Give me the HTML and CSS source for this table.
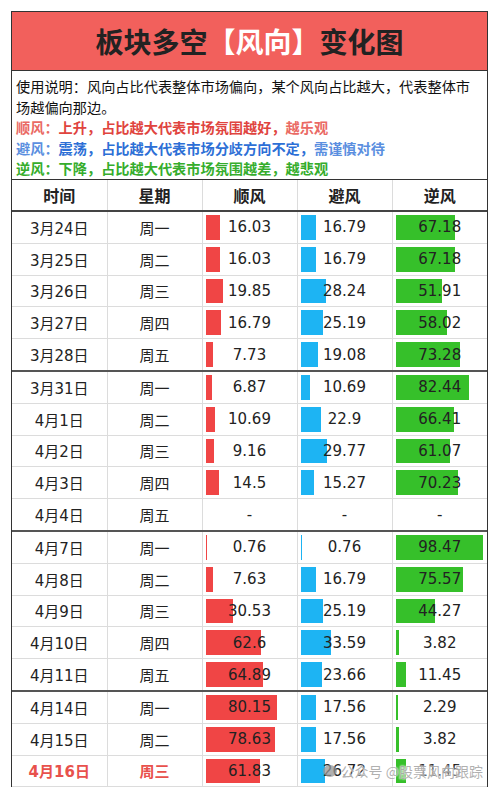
FILE: index.html
```html
<!DOCTYPE html>
<html lang="zh">
<head>
  <meta charset="UTF-8">
  <title>板块多空【风向】变化图</title>
  <link rel="stylesheet" href="styles.css">
</head>
<body>

  <div class="sheet">
    <div class="title">板块多空<span class="hl">【风向】</span>变化图</div>

    <div class="desc">
      <div>使用说明：风向占比代表整体市场偏向，某个风向占比越大，代表整体市场越偏向那边。</div>
      <div class="up"><span class="lt">顺风：</span>上升，占比越大代表市场氛围越好，<span class="lt">越乐观</span></div>
      <div class="mid"><span class="lt">避风：</span>震荡，占比越大代表市场分歧方向不定，<span class="lt">需谨慎对待</span></div>
      <div class="down">逆风：下降，占比越大代表市场氛围越差，越悲观</div>
    </div>

    <table class="grid">
      <thead>
        <tr>
          <th>时间</th><th>星期</th><th>顺风</th><th>避风</th><th>逆风</th>
        </tr>
      </thead>
      <tbody id="rows"></tbody>
    </table>

    <div class="mark"><span class="mark-icon"></span>公众号 @股票风向跟踪</div>
  </div>

  <script>
    // 日期, 星期, 顺风, 避风, 逆风, 是否新一周
    const data = [
      ["3月24日", "周一", 16.03, 16.79, 67.18, false],
      ["3月25日", "周二", 16.03, 16.79, 67.18, false],
      ["3月26日", "周三", 19.85, 28.24, 51.91, false],
      ["3月27日", "周四", 16.79, 25.19, 58.02, false],
      ["3月28日", "周五", 7.73, 19.08, 73.28, false],
      ["3月31日", "周一", 6.87, 10.69, 82.44, true],
      ["4月1日", "周二", 10.69, 22.9, 66.41, false],
      ["4月2日", "周三", 9.16, 29.77, 61.07, false],
      ["4月3日", "周四", 14.5, 15.27, 70.23, false],
      ["4月4日", "周五", null, null, null, false],
      ["4月7日", "周一", 0.76, 0.76, 98.47, true],
      ["4月8日", "周二", 7.63, 16.79, 75.57, false],
      ["4月9日", "周三", 30.53, 25.19, 44.27, false],
      ["4月10日", "周四", 62.6, 33.59, 3.82, false],
      ["4月11日", "周五", 64.89, 23.66, 11.45, false],
      ["4月14日", "周一", 80.15, 17.56, 2.29, true],
      ["4月15日", "周二", 78.63, 17.56, 3.82, false],
      ["4月16日", "周三", 61.83, 26.72, 11.45, false]
    ];

    function cell(val, kind) {
      if (val === null) return `<td class="num">-</td>`;
      return `<td class="num ${kind}" style="--w:${val}%">${val}</td>`;
    }

    const body = document.getElementById("rows");
    let html = "";
    data.forEach((r, i) => {
      let cls = r[5] ? "week" : "";
      if (i === data.length - 1) cls += " today";
      html += `<tr class="${cls}"><td>${r[0]}</td><td>${r[1]}</td>` +
        cell(r[2], "up") + cell(r[3], "mid") + cell(r[4], "down") + `</tr>`;
    });
    body.innerHTML = html;
  </script>

</body>
</html>
```

FILE: styles.css
```css
body {
  margin: 0;
  padding: 11px;
  background: white;
  font-family: 'DejaVu Sans', 'Noto Sans CJK SC', sans-serif;
  color: #222;
}
.sheet {
  width: 477px;
  border-left: 1px solid #333;
  border-right: 1px solid #333;
  border-top: 1px solid #333;
  box-sizing: border-box;
  position: relative;
}
.title {
  height: 58px;
  background: #f2605c;
  border-bottom: 1px solid #333;
  font-family: 'Noto Sans CJK SC', sans-serif;
  font-weight: bold;
  font-size: 28px;
  line-height: 58px;
  text-align: center;
  color: #222;
}
.title .hl {
  color: white;
}
.desc {
  padding: 5px 6px 2px 4px;
  font-family: 'Noto Sans CJK SC', sans-serif;
  font-size: 14.2px;
  line-height: 20.5px;
  color: #111;
  border-bottom: 1px solid #333;
  height: 101px;
}
.desc .up {
  color: #e0443e;
  font-weight: bold;
}
.desc .up .lt {
  color: #ea6a64;
}
.desc .mid {
  color: #2d6fd6;
  font-weight: bold;
}
.desc .mid .lt {
  color: #5b8fe0;
}
.desc .down {
  color: #35ad2c;
  font-weight: bold;
}

/* table */
.grid {
  width: 100%;
  border-collapse: collapse;
  table-layout: fixed;
  font-size: 15px;
}
.grid th, .grid td {
  border: 1px solid #dcdcdc;
  text-align: center;
  padding: 3px;
  height: 24.8px;
}
.grid tr > :first-child {
  border-left: none;
}
.grid tr > :last-child {
  border-right: none;
}
.grid th {
  font-family: 'Noto Sans CJK SC', sans-serif;
  font-weight: bold;
  font-size: 16px;
  border-top: none;
  border-bottom: 2px solid #444;
  height: 23px;
}
.grid tr.week td {
  border-top: 2px solid #555;
}
.grid tbody tr:last-child td {
  border-bottom: 1px solid #dcdcdc;
}
.grid tr.today td:nth-child(-n+2) {
  color: #e8514c;
  font-weight: bold;
}
.grid td.num {
  background-clip: content-box;
  background-origin: content-box;
  background-repeat: no-repeat;
  background-image: linear-gradient(to right, var(--c) 0, var(--c) var(--w), transparent var(--w));
}
.grid td.up {
  --c: #f04545;
}
.grid td.mid {
  --c: #1db4f3;
}
.grid td.down {
  --c: #36c02a;
}

/* watermark */
.mark {
  position: absolute;
  right: 4px;
  bottom: 6px;
  font-family: 'Noto Sans CJK SC', sans-serif;
  font-size: 14px;
  color: rgba(150, 150, 150, 0.75);
  text-shadow: 0 0 2px white, 0 0 2px white;
  display: flex;
  align-items: center;
  gap: 4px;
}
.mark-icon {
  width: 14px;
  height: 12px;
  border-radius: 50%;
  background: rgba(150, 150, 150, 0.75);
}
```
